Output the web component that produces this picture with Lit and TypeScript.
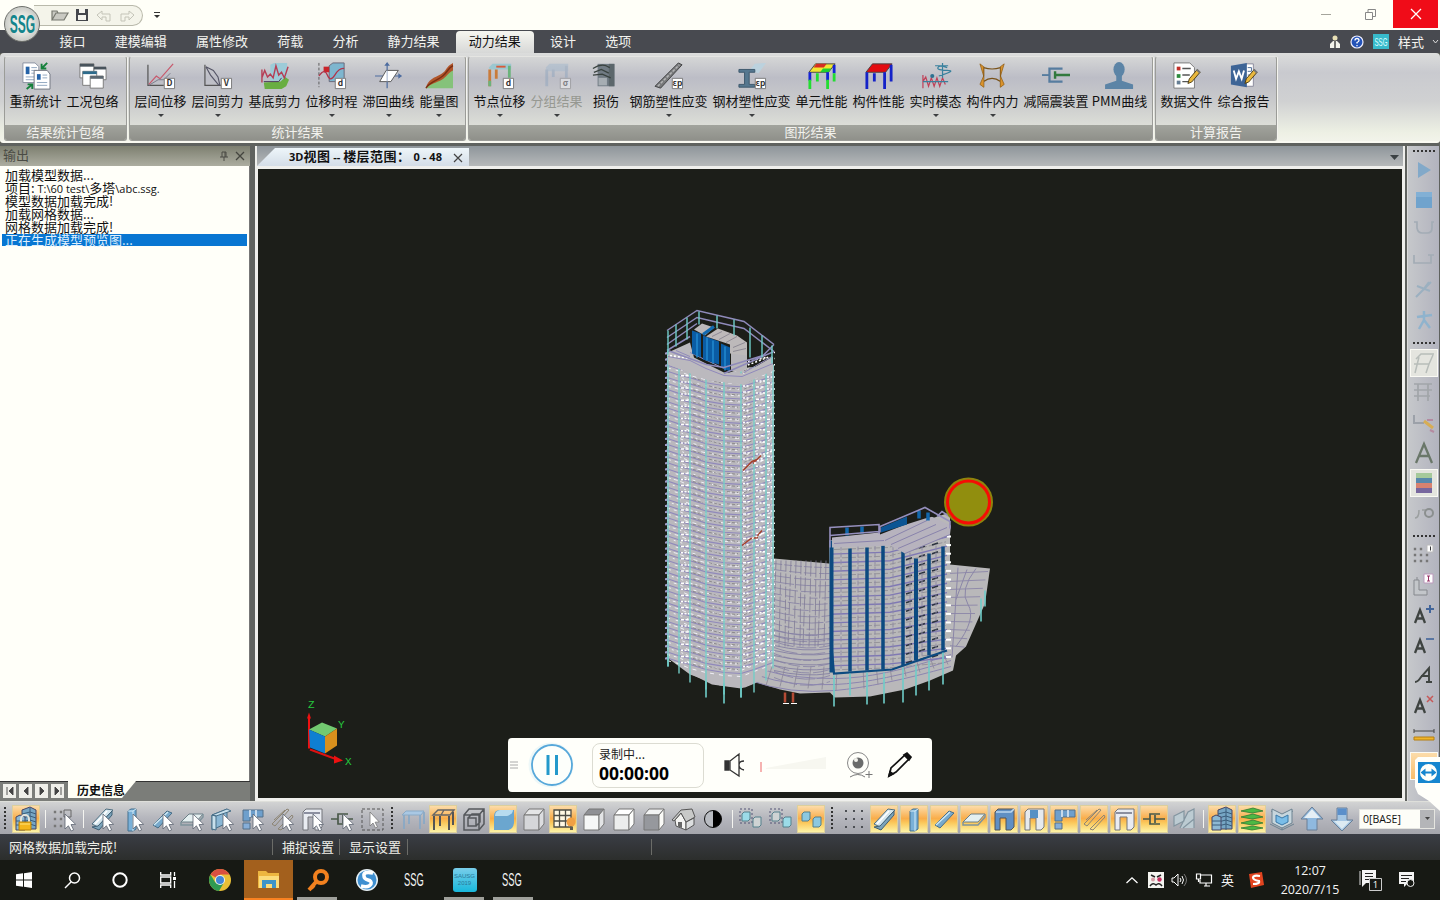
import { LitElement, html, svg, css } from "lit";
import { customElement } from "lit/decorators.js";
import { classMap } from "lit/directives/class-map.js";
import { styleMap } from "lit/directives/style-map.js";

const cursor = svg`<path d="M14 8l0 15 3.400-3.200 2.800 5.200 2.400-1.200-2.600-5.200 4.600-.3z" fill="#fff" stroke="#5a6270" stroke-width=".8"/>`;
const beam = svg`<path d="M3 18L17 3l7 1-3 3L9 21z" fill="#d4e6ee" stroke="#4f6e80"/><path d="M3 21l7 3L23 9V5L9 20z" fill="#7ba3ba" stroke="#3f6076"/><path d="M6 18L18 5" stroke="#fff" stroke-width="1.500"/>`;
const column = svg`<path d="M9 5l3-2h5v20l-3 2H9z" fill="#79b0d8" stroke="#45708f"/><path d="M9 5h5v20M14 5l3-2" fill="none" stroke="#d5ecf8"/>`;
const brace = svg`<path d="M4 19L18 5l5 2L9 22z" fill="#77a9cc" stroke="#476d86"/><path d="M5 19L19 6" stroke="#d2e9f3" stroke-width="1.4"/>`;
const slab = svg`<path d="M2 16l8-8h14l-7 8z" fill="#e4eff0" stroke="#6b7f86"/><path d="M2 16v3h15l7-8V8" fill="none" stroke="#7f949c" stroke-width="1.500"/>`;
const wall = svg`<path d="M3 9l15-6v14L3 24z" fill="#8ab7d5" stroke="#476e88"/><path d="M3 9l4 1v14l-4-1zM3 9l15-6 4 2-15 5z" fill="#c8e0ec" stroke="#476e88"/>`;
const opening = svg`<path d="M4 6l3-3h16v18l-3 3h-5V12h-6v12H4z" fill="#5f8fc4" stroke="#555"/><path d="M5 6h15l3-3" fill="none" stroke="#bdd8ee" stroke-width="1.600"/>`;
const opening2 = svg`<path d="M4 6l3-3h16v18l-3 3h-5V12h-6v12H4z" fill="#e6eaee" stroke="#777"/><path d="M9 4h8v8H9z" fill="#5590c4"/>`;
const elbow = svg`<path d="M4 4h20v7H11v4H4z" fill="#6e9fcc" stroke="#55708a"/><path d="M4 17h7v6H4z" fill="#86aed8" stroke="#55708a"/><path d="M11 4v7M17 4v7" stroke="#e6eef5" stroke-width="1.500"/>`;
const rods = svg`<path d="M3 18L18 3l2 1L6 20zM9 23L23 9l1 2L12 24zM5 14L16 4" fill="none" stroke="#8d8574"/>`;
const portal = svg`<path d="M4 6l3-3h16v18l-3 3h-4V11H9v13H4z" fill="#e9ecf2" stroke="#73747a"/><path d="M5 7h16" stroke="#8b8fa0" stroke-width="2"/>`;
const damper = svg`<path d="M2 13h7M19 18H9V8h10M14 9v8M14 13h10" fill="none" stroke="#4a5a4a" stroke-width="1.7"/>`;
const cube = (a: string, b: string, c: string) => svg`<path d="M4 9l5-6h15l-5 6z" fill="${a}" stroke="#777"/><path d="M4 9h15v15H4z" fill="${b}" stroke="#777"/><path d="M19 9l5-6v15l-5 6z" fill="${c}" stroke="#777"/>`;
const dots = svg`<path d="M5 5h0M13 5h0M21 5h0M5 13h0M13 13h0M21 13h0M5 21h0M13 21h0M21 21h0" stroke="#4c4f54" stroke-width="2" stroke-linecap="square"/>`;
const tower = svg`<path d="M9 4l8-3 6 3v19H9z" fill="#76a6c4" stroke="#446"/><path d="M9 8l8-2 6 2M9 12l8-2 6 2M9 16l8-2 6 2M9 20l8-2 6 2M17 2v22" stroke="#3a5d7a" fill="none"/><path d="M3 11l4-2 5 2v13H3z" fill="#8db9d3" stroke="#446"/><path d="M3 15h9M3 19h9" stroke="#3a5d7a"/>`;
const twins = (a: string, b: string) => svg`<path d="M4 8l2-2h6v7l-2 2H4z" fill="${a}" stroke="#55808c"/><path d="M15 13l2-2h6v8l-2 2h-6z" fill="${b}" stroke="#55808c"/>`;

const ICONS: Record<string, unknown> = {
  lock: svg`${tower}<path d="M8 16v-3a4 4 0 0 1 8 0v3" fill="none" stroke="#e4e4dc" stroke-width="2"/><path d="M6 16h12v8H6z" fill="#f4b61c" stroke="#b88208"/><path d="M7 18h10" stroke="#ffe37a"/>`,
  selNode: svg`<path d="M4 6h0M10 6h0M4 13h0M10 13h0M4 20h0M10 20h0" stroke="#777" stroke-width="2.4" stroke-linecap="square"/><path d="M13 4h7v7h-7z" fill="none" stroke="#666"/>${cursor}`,
  selBeam: svg`${beam}${cursor}`, selColumn: svg`${column}${cursor}`, selBrace: svg`${brace}${cursor}`,
  selSlab: svg`${slab}${cursor}`, selWall: svg`${wall}${cursor}`, selElbow: svg`${elbow}${cursor}`,
  selRods: svg`${rods}${cursor}`, selPortal: svg`${portal}${cursor}`, selDamper: svg`${damper}${cursor}`,
  selBox: svg`<path d="M3 3h21v21H3z" fill="none" stroke="#555" stroke-dasharray="3 2"/><path d="M11 6v14l3-3 2.500 5 2-1-2.400-4.800 4.200-.2z" fill="#fff" stroke="#777" stroke-width=".8"/>`,
  table: svg`<path d="M2 9l4-4h18l-3 4z" fill="#a9c8e4" stroke="#8aaac6"/><path d="M4 9v14M20 9v14M24 6v12M9 9v9" stroke="#87a8c6" stroke-width="1.7"/>`,
  frame: svg`<path d="M3 9l5-5h16l-4 5zM14 4l-3 5" fill="none" stroke="#666" stroke-width="1.4"/><path d="M4 10v14M19 10v14M23 6v13M10 10v10" stroke="#555" stroke-width="2"/>`,
  wire: svg`<path d="M4 9l5-6h15v15l-5 6H4zM4 9h15v15M19 9l5-6M8 12h8v8H8zM8 12l4-4h8v8l-4 4" fill="none" stroke="#55585c" stroke-width="1.500"/>`,
  solid: svg`<path d="M4 10q0-6 6-6h14v13q-1 7-7 7H4z" fill="#6ba6cf"/><path d="M5 10h12q6-2 6-6H10Q5 5 5 10z" fill="#b7dbef"/>`,
  cube0: cube("#e4e5e6", "#d5d6d9", "#dcdde0"), cubeTop: cube("#8f9095", "#f6f7f7", "#e3e4e6"),
  cubeSide: cube("#fff", "#eceded", "#fdfdfb"), cubeFront: cube("#f2f3f3", "#96989d", "#fafaf7"),
  grid: svg`<path d="M4 4h17v17H4zM4 9.5h17M4 15h17M9.5 4v17M15.500 4v17" fill="#fff8e3" stroke="#4d4d46" stroke-width="1.3"/><circle cx="21" cy="16" r="4.500" fill="#f0a044"/><path d="M20 20.500h3v3.500h-3z" fill="#5c5a50"/>`,
  house: svg`<path d="M5 14l6-7 5 9v8l-10-4z" fill="#f4f4f2" stroke="#555"/><path d="M16 16l8-4v7l-8 5z" fill="#dcdedf" stroke="#555"/><path d="M2 14L11 4l11-1 3 8-9 5-5-9-7 8z" fill="#c8c9c8" stroke="#555"/><path d="M8 16h4v6l-4-1.500z" fill="#666"/>`,
  contrast: svg`<circle cx="13" cy="13" r="8.500" fill="#b9bcc2" stroke="#111"/><path d="M13 4.500a8.500 8.500 0 0 1 0 17z" fill="#000"/>`,
  twinA: svg`<path d="M2 3h12v14H2z" fill="none" stroke="#557" stroke-dasharray="2 2"/>${twins("#9bdbe8", "#cfd3d3")}`,
  twinB: svg`<path d="M2 3h12v14H2z" fill="none" stroke="#557" stroke-dasharray="2 2"/>${twins("#cfd3d3", "#9bdbe8")}`,
  twinC: twins("#8cc8e0", "#8cc8e0"),
  dots, beam, column, brace, slab, opening, opening2, elbow, rods, portal, damper,
  ghost: svg`<path d="M3 10L13 5v10L3 20zM9 22l8-16 6-3v19M12 22l11-9" fill="#bccbd2" stroke="#8395a0" stroke-width="1.2"/>`,
  tower,
  floors: svg`<path d="M2 5l12-3 10 3-11 2zM2 11l12-3 10 3-11 2zM2 17l12-3 10 3-11 2zM2 22l12-2 10 2-11 2z" fill="#4cb944" stroke="#2f7a33" stroke-width=".8"/>`,
  view: svg`<path d="M2 5l11 5 11-5M1 18l12 6 12-6M13 12v12" fill="none" stroke="#6c8391"/><path d="M3 3l10 5 10-5v14l-10 5-10-5z" fill="#c7d6dd" stroke="#6c8391"/><path d="M7 9l6 3 6-3v7l-6 3-6-3z" fill="#79bde8" stroke="#3a78a8"/>`,
  up: svg`<path d="M13 1l11 12h-6v11H8V13H2z" fill="#8fb9df" stroke="#6a7f96"/><path d="M13 3l8 9H5z" fill="#e5eff5"/>`,
  down: svg`<path d="M13 25L2 14h6V2h10v12h6z" fill="#a4c6e4" stroke="#6a7f96"/><path d="M8.500 2.500h9V9h-9z" fill="#5b8fca"/><path d="M13 23l-8-8h16z" fill="#dceaf2"/>`,
  play: svg`<path d="M7 5l13 8-13 8z" fill="#82a9c9"/>`,
  stop: svg`<path d="M5 5h16v16H5z" fill="#70a3cd"/><path d="M5 5h16v5H5z" fill="#82b0d5"/>`,
  cup: svg`<path d="M3 5h3v6q1 5 5 5h5q5 0 5-5V5h2" fill="none" stroke="#a3acb5" stroke-width="1.700"/>`,
  tray: svg`<path d="M3 8v8h17V8M17 8h6" fill="none" stroke="#a3acb5" stroke-width="1.700"/>`,
  pick: svg`<path d="M5 20L20 5M6 9l13 5M12 13l6-8" fill="none" stroke="#9bb0c0" stroke-width="2"/>`,
  walk: svg`<path d="M13 4v9l-5 9M13 13l6 8M6 10l15-2" fill="none" stroke="#8fb3cd" stroke-width="2.500"/>`,
  bent: svg`<path d="M5 9l5-5h13M3 14h15l4-9M8 7L4 23M18 14l-3 9" fill="none" stroke="#b7bdb9" stroke-width="1.5"/>`,
  rack: svg`<path d="M3 4h18M3 10h18M3 16h16M7 4v17M17 4v17" fill="none" stroke="#a1a5a9" stroke-width="1.700"/>`,
  brush: svg`<path d="M3 5v8h10" fill="none" stroke="#9ca1a9" stroke-width="2"/><path d="M13 11l9 7" stroke="#d7ad55" stroke-width="3"/><path d="M16 10h6M19 20l4 2" stroke="#b48aa0" stroke-width="2"/>`,
  bigA: svg`<path d="M5 23L13 4l8 19M8 16h10" fill="none" stroke="#6a7769" stroke-width="2.3"/>`,
  bands: svg`<path d="M5 3h16v5H5z" fill="#a5c99b"/><path d="M5 8h16v5H5z" fill="#5888ac"/><path d="M5 13h16v5H5z" fill="#d88270"/><path d="M5 18h16v5H5z" fill="#77679e"/>`,
  gear: svg`<path d="M4 18q4 0 4-8M11 10h4" fill="none" stroke="#9b9f9f" stroke-width="1.5"/><circle cx="18" cy="13" r="4" fill="none" stroke="#8b8f8f" stroke-width="2"/>`,
  dots1: svg`<path d="M4 6h0M10 6h0M4 12h0M10 12h0M16 12h0M4 18h0M10 18h0M16 18h0" stroke="#777" stroke-width="2.400" stroke-linecap="square"/><path d="M16 2h6v7h-6z" fill="#fff" stroke="#bbb"/><path d="M19.500 3.500v4" stroke="#333"/>`,
  corner: svg`<path d="M3 7v15h13v-5H8V7zM6 4v3" fill="#c3c6ca" stroke="#85888d"/><path d="M13 1h9v9h-9z" fill="#fff" stroke="#b9b"/><path d="M17.500 3v5M16 3h3M16 8h3" stroke="#936"/>`,
  aPlus: svg`<path d="M4 20l5-13 5 13M6 15.500h6" fill="none" stroke="#3f4441" stroke-width="2.300"/><path d="M19 2v8M15 6h8" stroke="#42659a" stroke-width="2"/>`,
  aMinus: svg`<path d="M4 20l5-13 5 13M6 15.500h6" fill="none" stroke="#3f4441" stroke-width="2.300"/><path d="M15 6h8" stroke="#42659a" stroke-width="1.600"/>`,
  aItal: svg`<path d="M4 19q3 0 6-5l8-9v14M10 13h8M15 19h6" fill="none" stroke="#3f4441" stroke-width="1.900"/>`,
  aDel: svg`<path d="M4 20l5-13 5 13M6 15.500h6" fill="none" stroke="#3f4441" stroke-width="2.300"/><path d="M16 3l6 6M22 3l-6 6" stroke="#c75858" stroke-width="1.500"/>`,
  ruler: svg`<path d="M3 8h20M3 6v4M23 6v4" stroke="#444"/><path d="M3 14h20v3H3z" fill="#f0b52a" stroke="#b57f10"/>`,
};

const badge = (t: string) => svg`<path d="M18.500 17.500h11v11h-11z" fill="#fff" stroke="#777"/><text x="24" y="26" font-size="9" font-weight="700" text-anchor="middle" fill="#333">${t}</text>`;
const word = svg`<path d="M17 2h8v24h-8z" fill="#fff" stroke="#889"/><path d="M19 6h4v4h-4M19 14h4" fill="none" stroke="#4b6c94"/><path d="M1 4l17-3v26L1 24z" fill="#3d6496"/><path d="M4 9l2.500 9 3-8 3 8 2.500-9" fill="none" stroke="#fff" stroke-width="2"/>`;
const pencil = svg`<path d="M16 23l1.500-5L26 8l3 3-9 10.500z" fill="#e9b83e" stroke="#493a12"/><path d="M25.500 8l3.500 3.500" stroke="#777" stroke-width="2"/>`;

const RIB: Record<string, unknown> = {
  recalc: svg`<path d="M1 1h13l4 4v17H1z" fill="#fff" stroke="#8990a0"/><path d="M4 5h4v8H4z" fill="#2563a8"/><path d="M10 6h6M10 9h6M10 12h5M4 16h11M4 19h9" stroke="#8da4bd"/><path d="M13 9h14l3 4v16H13z" fill="#fff" stroke="#70757f"/><path d="M16 13h4v6h-4z" fill="#2563a8"/><path d="M22 14h5M22 17h5M16 22h11M16 25h11" stroke="#8da4bd"/><path d="M27 1l-6 6M21 2v5h5M5 29l6-5M6 24h5v5" fill="none" stroke="#15803b" stroke-width="2"/>`,
  cases: svg`<path d="M1 2h15v15H1z" fill="#fff" stroke="#777"/><path d="M1 2h15v3H1z" fill="#48535c"/><path d="M16 6h13v13H16z" fill="#fff" stroke="#777"/><path d="M16 5h13v3H16z" fill="#48535c"/><path d="M4 10h15v15H4z" fill="#fff" stroke="#777"/><path d="M4 10h15v3H4z" fill="#2d6b8c"/><path d="M12 15h14v13H12z" fill="#fff" stroke="#777"/><path d="M12 15h14v3H12z" fill="#5b6770"/>`,
  drift: svg`<path d="M1 3v22h17" fill="none" stroke="#555" stroke-width="1.300"/><path d="M2 24L10 15l4 3L28 2" fill="none" stroke="#c8586c" stroke-width="1.300"/><path d="M2 25l10-6 6 0 7-7" fill="none" stroke="#778"/>${badge("D")}`,
  shear: svg`<path d="M1 3v22h17" fill="none" stroke="#555" stroke-width="1.300"/><path d="M2 5l8 4 5 7 2 9M2 5l5 9 9 11" fill="none" stroke="#556" stroke-width="1.200"/>${badge("V")}`,
  base: svg`<path d="M10 3l4-2h14v15l-4 4H10z" fill="#9dcbd8"/><path d="M3 22l18-1 5-5 4 3-3 7-5 3H4z" fill="#69ae42"/><path d="M1 8v14M1 17l3-8 3 7 3-3 3 4 3-13 3 10 3-3 3 6 4-12" fill="none" stroke="#b63e55" stroke-width="1.500"/><path d="M3 21h16l3-4" stroke="#435" fill="none"/>`,
  hist: svg`<path d="M1 1v26" stroke="#555" stroke-dasharray="3 2"/><path d="M12 4l4-3h12v16l-4 4H12z" fill="#7eb6cf" stroke="#667"/><path d="M6 5h6v6H6z" fill="#c9252b"/><path d="M1 15q6-9 9-1t8 0 10-7" fill="none" stroke="#b0344a" stroke-width="1.400"/>${badge("d")}`,
  loop: svg`<path d="M13 1v27M0 15h28" stroke="#4e6da0" stroke-width="1.300"/><path d="M5 21l7-12h13l-8 12z" fill="#fff" stroke="#555"/><path d="M10 4h6l-3-4zM25 12v6l4-3z" fill="#4e6da0"/><path d="M13 9v12" stroke="#9aabc8"/>`,
  energy: svg`<path d="M1 28L15 16 30 5v23z" fill="#85c27a"/><path d="M1 28C3 18 10 17 17 13S22 5 30 1v8C24 12 23 16 18 19S6 23 1 28z" fill="#b0552a"/><path d="M1 28C5 21 13 20 19 15S24 7 30 4" fill="none" stroke="#7a2e12" stroke-width="1.500"/>`,
  nodes: svg`<path d="M3 6l4-4h20v6H4z" fill="#9cc7d0"/><path d="M4 8v18M11 8v10" stroke="#c97b3b" stroke-width="3"/><path d="M4 20v6M25 4v13" stroke="#6bb37b" stroke-width="3"/><path d="M11 4h10v2H11z" fill="#d85a3b"/>${badge("d")}`,
  group: svg`<g opacity=".45"><path d="M3 6l4-4h20v8H4z" fill="#9fb6cd"/><path d="M4 8v18M11 8v8M25 4v13" stroke="#8aa2bd" stroke-width="3"/>${badge("σ")}</g>`,
  damage: svg`<path d="M6 2h18v24H6z" fill="#717b84"/><path d="M18 2h6v24h-6z" fill="#5c676c"/><path d="M1 7q8-5 14-3l4 2M2 11l8-3 8 4M1 14l10-1 9 4" fill="none" stroke="#39423f" stroke-width="1.400"/><path d="M7 17h9v8H7z" fill="#a6adb3"/>`,
  rebar: svg`<path d="M0 26L25 1l4 2L6 28z" fill="#78797b" stroke="#3f4142"/><path d="M3 26L26 3" stroke="#b4b5b6" stroke-width="1.600" stroke-dasharray="3 1.500"/>${badge("εp")}`,
  steel: svg`<path d="M12 9l6-7 12-1-8 11z" fill="#bcd2de"/><path d="M1 8h17v3h-6v13h6v3H1v-3h6V11H1z" fill="#55778f" stroke="#3b566b"/>${badge("εp")}`,
  elem: svg`<path d="M8 2h21l-7 9H1z" fill="#f3e531" stroke="#444"/><path d="M9 2h11l-3 4H6z" fill="#d62d22"/><path d="M16 7h9l-3 4h-9z" fill="#20d030"/><path d="M2 11v9M21 11v9M28 3v9" stroke="#1422d8" stroke-width="3"/><path d="M2 19v10M21 19v10M28 12v9M10 12v9" stroke="#22dd32" stroke-width="3"/>`,
  member: svg`<path d="M8 2h21l-7 9H1z" fill="#e30b10" stroke="#444"/><path d="M2 11v18M21 11v18M28 3v18M10 12v9" stroke="#1422c8" stroke-width="3"/>`,
  mode: svg`<path d="M1 14v14M1 21l3-5 3 10 3-9 3 9 3-9 3 9 3-9 3 7" fill="none" stroke="#c04058" stroke-width="1.300"/><path d="M1 21h27M22 1v16M14 4h14M27 6q-9-3-10 0t10 3-9 6" fill="none" stroke="#38809d" stroke-width="1.300"/><circle cx="11" cy="15" r="2.200" fill="#2d7191"/>`,
  force: svg`<path d="M5 6q9 3 18 0M5 5v22M23 5v22M5 21q9-7 18 0" fill="none" stroke="#795219" stroke-width="1.300"/><path d="M1 2l4 3v10zM27 2l-4 3v10zM5 15l-4 9 4 3M23 15l4 9-4 3" fill="#db932c" stroke="#8e5c16" stroke-width=".8"/>`,
  damp: svg`<path d="M0 14h8" stroke="#567c9f" stroke-width="2"/><path d="M22 7H8v14h14" fill="none" stroke="#567c9f" stroke-width="2.400"/><path d="M14 10v8M14 14h16" stroke="#32793d" stroke-width="2.600"/>`,
  pmm: svg`<ellipse cx="14" cy="8" rx="6" ry="8" fill="#5c84a6"/><path d="M11 14h6v6l12 4v5H-1v-5l12-4z" fill="#5c84a6"/>`,
  data: svg`<path d="M1 1h17l5 5v22H1z" fill="#fff" stroke="#777"/><path d="M4 5h4v4H4z" fill="#c22f28"/><path d="M4 13h4v4H4z" fill="#2d8a3d"/><path d="M4 20h4v4H4z" fill="#667e94"/><path d="M10 7h9M10 14h8M10 21h7" stroke="#555" stroke-width="1.500"/>${pencil}`,
  report: svg`${word}${pencil}`,
};

type Item = { t: string; i: string; w?: number; a?: boolean; off?: boolean };
const GROUPS: { title: string; w: number; items: Item[] }[] = [
  { title: "结果统计包络", w: 123, items: [{ t: "重新统计", i: "recalc" }, { t: "工况包络", i: "cases" }] },
  { title: "统计结果", w: 337, items: [
    { t: "层间位移", i: "drift", a: true }, { t: "层间剪力", i: "shear", a: true }, { t: "基底剪力", i: "base" },
    { t: "位移时程", i: "hist", a: true }, { t: "滞回曲线", i: "loop", a: true }, { t: "能量图", i: "energy", w: 44, a: true }] },
  { title: "图形结果", w: 685, items: [
    { t: "节点位移", i: "nodes", a: true }, { t: "分组结果", i: "group", a: true, off: true }, { t: "损伤", i: "damage", w: 42 },
    { t: "钢筋塑性应变", i: "rebar", w: 83, a: true }, { t: "钢材塑性应变", i: "steel", w: 83, a: true },
    { t: "单元性能", i: "elem" }, { t: "构件性能", i: "member" }, { t: "实时模态", i: "mode", a: true },
    { t: "构件内力", i: "force", a: true }, { t: "减隔震装置", i: "damp", w: 70 }, { t: "PMM曲线", i: "pmm" }] },
  { title: "计算报告", w: 122, items: [{ t: "数据文件", i: "data" }, { t: "综合报告", i: "report" }] },
];

// "|" separator, ":" grip, "*" prefix marks a pressed button
const BAR = ("*lock | selNode | selBeam selColumn selBrace selSlab selWall selElbow selRods selPortal selDamper selBox : " +
  "table *frame wire *solid cube0 *grid cubeTop cubeSide cubeFront house contrast | twinA twinB *twinC : " +
  "dots *beam *column *brace *slab *opening *opening2 *elbow *rods *portal *damper ghost | *tower *floors view up down").split(" ");
const SIDE = ": play stop cup tray pick walk : *bent rack brush bigA *bands gear : dots1 corner aPlus aMinus aItal aDel ruler".split(" ");

@customElement("model-scene")
class ModelScene extends LitElement {
  static styles = css`
    :host { display: block; flex: 1; min-height: 0; background: #1c1e19; overflow: hidden; }
    svg { display: block; width: 100%; height: 100%; }
    .axis { font: 400 11px "Liberation Mono", monospace; fill: #25c83e; }
  `;

  towerLines() {
    const out: unknown[] = [];
    const cols = [[668, 349, 666], [679, 342, 673], [690, 344, 682], [706, 368, 689], [724, 372, 694], [741, 365, 697], [754, 352, 692], [766, 352, 680], [773, 345, 668]];
    for (let k = 0; k < 51; k++) {
      const y = 352 + k * 6.1;
      out.push(svg`<path d="M666 ${y}l12 4 12 3 16 5 18 3 17 1 13-4 19-7" fill="none" stroke="#9089bb" stroke-width="1.100"/>`);
      out.push(svg`<path d="M667 ${y + 3}l11 3 12 5 16 4 18 3 17 1 13-5 19-7" fill="none" stroke="#f0eff6" stroke-width="1" stroke-dasharray="${2 + (k % 3)} ${3 + (k % 4)}"/>`);
      out.push(svg`<path d="M681 ${y + 5}h10M743 ${y + 9}h7M756 ${y + 4}h9M767 ${y}h8" stroke="#fff" stroke-width="1.500" stroke-dasharray="${2 + (k % 2)} 1.500"/>`);
      out.push(svg`<path d="M693 ${y + 7}l10 3M709 ${y + 9}l12 3M727 ${y + 11}l11 1M744 ${y + 6}l8-3" stroke="#8c8a8c" stroke-width="1" stroke-dasharray="3 2"/>`);
      out.push(svg`<path d="M665 ${y + 1}h4" stroke="#a29cc8" stroke-width="2"/>`);
    }
    cols.forEach(([x, a, b]) => out.push(svg`<path d="M${x} ${a}V${b}" stroke="#74cdc8" stroke-width="1.400"/>`));
    return out;
  }

  podiumLines() {
    const out: unknown[] = [];
    for (let k = 0; k < 20; k++) out.push(svg`<path d="M774 ${563 + k * 6}q30 ${4 + k * 0.5} 56 4" fill="none" stroke="#8580a4" stroke-width=".8" stroke-dasharray="${8 + (k % 5) * 4} ${2 + (k % 3)}"/>`);
    for (let k = 0; k < 12; k++) out.push(svg`<path d="M${776 + k * 5} 560l${-3 + (k % 3)} 86" stroke="#807b96" stroke-width=".8" stroke-dasharray="${9 + k} 2"/>`);
    for (let k = 0; k < 9; k++) out.push(svg`<path d="M774 ${630 + k * 5}q30 7 56 3" fill="none" stroke="#8580a4" stroke-width=".9"/>`);
    for (let k = 0; k < 3; k++) out.push(svg`<path d="M${750 + k * 8} ${680 - k * 5}Q790 ${694 - k * 8} 835 ${690 - k * 6}T${951} ${666 - k * 6}" fill="none" stroke="#8c86b0"/>`);
    for (let k = 0; k < 14; k++) out.push(svg`<path d="M${772 + k * 13} ${666 - Math.max(0, k - 7) * 3}l${-6 + k} ${24 - Math.abs(k - 5)}" stroke="#8a8598" stroke-width=".8"/>`);
    for (let k = 0; k < 10; k++) out.push(svg`<path d="M948 ${573 + k * 8}l${40 - k * 2.6} ${-2 + k * 0.4}" stroke="#8b86a8" stroke-width=".9"/>`);
    out.push(svg`<path d="M958 567l-6 90M976 568q-17 22-8 36t-12 42M967 569l-11 30" fill="none" stroke="#8b86a8"/>`);
    return out;
  }

  annexLines() {
    const out: unknown[] = [];
    for (let k = 0; k < 15; k++) {
      const y = 544 + k * 8.6;
      out.push(svg`<path d="M830 ${y + 1}L890 ${y - 1}L947 ${y - 17 + k * 0.7}" fill="none" stroke="#7f78b4" stroke-width="1.400"/>`);
      out.push(svg`<path d="M834 ${y + 5}L888 ${y + 3}L946 ${y - 12 + k * 0.7}" fill="none" stroke="#929096" stroke-width=".9" stroke-dasharray="6 2"/>`);
      out.push(svg`<path d="M906 ${y - 2}l6-2M919 ${y - 5}l6-2M932 ${y - 8}l6-2" stroke="#2c3440" stroke-width="1.600"/>`);
      out.push(svg`<path d="M946 ${y - 8}h5" stroke="#fff" stroke-width="2"/>`);
    }
    for (const x of [841, 858, 875, 893, 910, 922, 936]) out.push(svg`<path d="M${x} 545V${668 - Math.max(0, x - 885) * 0.32}" stroke="#8e8aa4" stroke-dasharray="5 2"/>`);
    const walls = [[831.5, 4, 540, 672], [850, 3.5, 548, 671], [867, 3.5, 547, 670], [883, 3.5, 545, 669], [903, 3.500, 543, 665], [916, 4, 558, 660], [929, 3.500, 553, 655], [943, 3.500, 546, 650]];
    walls.forEach(([x, w, a, b]) => out.push(svg`<path d="M${x} ${a}V${b}" stroke="#0c4a80" stroke-width="${w}"/>`));
    return out;
  }

  render() {
    return html`<svg viewBox="258 169 1144 628">
      <path d="M774 558L829 563 950 564 990 568 985 603 966 646 956 655 953 670 930 680 905 689 870 696 835 697 830 692 800 693 780 689 757 682 745 687 720 685 690 674 667 657 700 600z" fill="#b9b8ba"/>
      ${this.podiumLines()}
      <path d="M985 590v16M981 598v23" stroke="#6fcdc9" stroke-width="1.600"/>
      <path d="M667 350L683 341 760 352 774 350V664L756 682 741 688 712 684 690 673 667 656z" fill="#bab8bd"/>
      ${this.towerLines()}
      <path d="M668 352V330L697 310 744 321 774 344V364L741 368 724 374 690 357z" fill="#1c1e19"/>
      <path d="M668 352l22-10 4 15 30 15 20 1 29-17v14l-30 14-35-4-40-16z" fill="#bbb9be"/>
      <path d="M668 356l22 4 16 8 18 7 18 1 31-13M690 352l34 16M744 372l28-16M676 350l14 6" fill="none" stroke="#9089bb"/>
      <path d="M670 355l20 3M744 366l26-10M748 361l18-4" stroke="#fff" stroke-width="1.600" stroke-dasharray="2 2"/>
      <path d="M692 330l9 3v24l-9-4zM703 335l16 6v23l-16-5zM721 343l9 4v24l-9-4z" fill="#0a5ca4"/>
      <path d="M697 333v24M707 337v23M713 340v23M725 346v24" stroke="#2289cf" stroke-width="1.500"/>
      <path d="M731 346l16 4v18l-8 4-8-2z" fill="#b7b5ba"/>
      <path d="M694 329l8-6 12 4-9 8zM706 336l12-8 19 7 10 7v13l-17-2v-9z" fill="#bdb9ba"/>
      <path d="M703 334l11-8" stroke="#126ab0" stroke-width="3"/>
      <path d="M712 336l10-5M719 339l11-6M726 342l11-6M733 347l12-5M733 351l13-3" stroke="#8e8a95"/>
      <path d="M667 330L697 310 744 321 774 344M667 337L697 317 744 328 774 351M667 344L697 323M667 350L690 336M724 373L774 351M668 350L706 364 724 367 763 355 774 344" fill="none" stroke="#8f8aba" stroke-width="1.500"/>
      <path d="M668 330v24M676 324v22M687 317v22M699 311v13M717 315v13M734 319v16M750 327v30M762 335v22M772 345v18" stroke="#6fcdc9" stroke-width="1.400"/>
      <path d="M743 470l9-9 5-2M753 463l8-8M742 545l9-7 7-1M755 538l7-8" fill="none" stroke="#a5412d" stroke-width="1.500"/>
      <path d="M754 463l8-5 6-6 6-2M752 538l9-4 10-6" stroke="#fff" fill="none" stroke-width="1.500" stroke-dasharray="2 2"/>
      <path d="M829 540L885 533 950 512V648L890 669 831 673z" fill="#b9b8b9"/>
      ${this.annexLines()}
      <path d="M832 537L879 532 925 513 951 525 950 534 905 553 890 545 832 547z" fill="#b7b3be"/>
      <path d="M885 540l42-20M891 544l45-20M898 548l49-21M905 553l45-19M834 543l50-3" stroke="#8983ac" fill="none"/>
      <path d="M880 526L925 508 937 515 925 518 903 525 880 534z" fill="#1c1e19"/>
      <path d="M881 527L907 516V524L881 532z" fill="#0c5594"/><path d="M847 527v8M862 526v7M919 510v8M928 512v8" stroke="#1268ac" stroke-width="3.500"/>
      <path d="M830 547V527L879 524V533M880 532V526L925 507 950 521V528M937 516l5-5 9 6M830 535l49-4" fill="none" stroke="#958fbd" stroke-width="1.600"/>
      <path d="M831 640l3 33 58-4 55-19" fill="none" stroke="#0c4a80" stroke-width="2.200"/>
      <path d="M834 675v31M850 673v22M867 672v32M884 672v31M903 667v35M916 664v31M929 660v30M943 652v32M668 655v11M706 680v17M724 683v20M741 686v11" stroke="#6fcdc9" stroke-width="1.600"/>
      <path d="M785 692v10M793 692v10" stroke="#b44b35" stroke-width="2.500"/><path d="M783 703h6M791 703h6" stroke="#fff"/>
      <circle cx="968.500" cy="501.500" r="24.500" fill="#8e840c"/><circle cx="968.500" cy="501.500" r="21" fill="#918e0e" stroke="#f60d05" stroke-width="3"/>
      <path d="M309 748V716" stroke="#e11" stroke-width="2"/><path d="M307 718l2-6 2 6z" fill="#e11"/>
      <path d="M310 749l27 10" stroke="#d11" stroke-width="2"/><path d="M334 755l9 5-9 3z" fill="#e11"/>
      <path d="M309 729l13-7 15 6-12 8z" fill="#72ca70"/><path d="M309 729l16 7v17l-15-6z" fill="#0f7fd2"/><path d="M325 736l12-8v17l-12 8z" fill="#d8901d"/>
      <text class="axis" x="308" y="707">Z</text><text class="axis" x="338" y="727">Y</text><text class="axis" x="345" y="764">X</text>
    </svg>`;
  }
}

@customElement("app-root")
class AppRoot extends LitElement {
  static styles = css`
    :host { display: flex; flex-direction: column; position: relative; width: 1440px; height: 900px; overflow: hidden;
      background: #55574f; color: #111; font: 13px/16px "Noto Sans CJK SC", "Open Sans", sans-serif; white-space: nowrap; }
    * { box-sizing: border-box; }
    svg { display: block; overflow: visible; }
    .title { height: 30px; flex: none; display: flex; background: #fffff8; }
    .quick { margin: 5px 0 0 34px; width: 109px; height: 21px; border: 1px solid #b9b9ab; border-left: 0; border-radius: 0 11px 11px 0; background: #f4f4ea; }
    .more { margin: 12px 0 0 11px; width: 6px; }
    .win { margin-left: auto; display: flex; height: 28px; }
    .win div { width: 45px; display: grid; place-items: center; }
    .win .x { background: #f00c18; margin-right: 2px; }
    .tabs { height: 23px; flex: none; display: flex; background: #484a50; color: #f4f4f0; padding-left: 45px; line-height: 21px; }
    .tab { padding: 0 14.6px; }
    .tab.on { color: #111; background: linear-gradient(#f6f6f0, #d7d8d7); border-radius: 4px 4px 0 0; margin-top: 1px; line-height: 20px; padding: 0 13px; margin-left: 1.6px; margin-right: 1.6px; }
    .tools { margin-left: auto; display: flex; align-items: center; gap: 9px; padding-right: 2px; line-height: 18px; }
    .ribbon { height: 90px; flex: none; display: flex; gap: 2px; padding: 3px 0 0 4px; border-radius: 4px 4px 3px 3px;
      background: linear-gradient(#dcdddc, #c9cacf 22%, #d0d1d2 55%, #edf0e4 90%, #f2f3ea); border-bottom: 2px solid #fafaf2; }
    .group { display: flex; flex-direction: column; height: 85px; border: 1px solid #9b9c98; border-top-color: #e5e5e2; border-radius: 3px;
      background: linear-gradient(#d5d6d6, #bcbdc6 25%, #cacbcc 55%, #e8eadf 100%); box-shadow: 1px 0 #f4f4ee; }
    .items { display: flex; padding-left: 2px; height: 68px; }
    .item { width: 57px; display: flex; flex-direction: column; align-items: center; flex: none; }
    .item svg { margin-top: 5px; flex: none; }
    .item.off { color: #969891; }
    .lbl { height: 16px; margin-top: 3px; }
    .arr { border: 3px solid transparent; border-top-color: #3c3e40; border-bottom: 0; margin-top: 5px; }
    .gt { flex: 1; background: linear-gradient(#a2a49d, #8f908a); color: #f2f2ee; text-align: center; line-height: 13px; border-radius: 0 0 2px 2px; }
    .body { flex: 1; min-height: 0; display: flex; padding-top: 3px; background: #5f625f; }
    .out { width: 250px; display: flex; flex-direction: column; }
    .oh { height: 20px; background: linear-gradient(#7d7f70, #acada0); color: #4a4b44; display: flex; align-items: center; padding: 0 5px 0 3px; gap: 7px; }
    .oh span { margin: -3px auto 0 0; }
    .log { flex: 1; background: #fffff9; border-right: 1px solid #777; padding: 2px 2px 0; line-height: 13px; }
    .log div { height: 13px; padding-left: 3px; }
    .log small { font: 11px/13px "Open Sans", sans-serif; }
    .log .sel { color: #dfeefc; background: linear-gradient(#0876d2, #0876d2) 0 1px no-repeat; }
    .nav { height: 20px; display: flex; gap: 3px; padding: 2px 0 0 3px; background: #7b7d79; border-top: 1px solid #333; }
    .nav i { width: 13px; height: 14px; background: #efefe9; display: grid; place-items: center; }
    .nav b { margin: -3px 0 0 1px; width: 68px; height: 17px; background: #fffff6; clip-path: polygon(0 0, 100% 0, 54px 100%, 0 100%); font-size: 12px; line-height: 18px; padding-left: 9px; }
    .view { width: 1150px; margin-left: 5px; display: flex; flex-direction: column; border: solid #efefec; border-width: 0 3px 3px; }
    .vt { height: 20px; flex: none; margin: 0 -1px; display: flex; background: linear-gradient(#8e959a, #b6b9ba); align-items: flex-end; padding-right: 3px; }
    .vtab { width: 212px; height: 18px; background: linear-gradient(#eef6fa, #d4dde7); clip-path: polygon(18px 0, 100% 0, 100% 100%, 0 100%); display: flex; align-items: center; font-weight: 700; padding: 0 0 2px 32px; }
    .vtab span { letter-spacing: .45px; }
    .vtab small { font: 700 11px/16px "Open Sans", sans-serif; padding-top: 1px; }
    .vtab .z { margin-left: 3px; letter-spacing: .1px; }
    .vtab svg { margin: 5px 0 0 12px; }
    .vdrop { margin-left: auto; }
    .vline { height: 3px; flex: none; background: #efefec; }
    .side { width: 32px; margin-left: 2px; background: linear-gradient(90deg, #c6c8cb, #b2b3be); border-left: 1px solid #dcdcdc; display: flex; flex-direction: column; align-items: center; }
    .side .btn { height: 30px; width: 30px; }
    .hgrip { width: 22px; height: 2px; margin: 4px 0 3px; background: repeating-linear-gradient(90deg, #333 0 2px, transparent 2px 4px); flex: none; }
    .hgrip.n { margin: 7px 0 4px; }
    .bar { height: 33px; flex: none; display: flex; align-items: center; background: linear-gradient(#d2d3d3, #b5b6bd 50%, #a4a5ac); border-top: 1px solid #dedfda; padding-top: 1px; }
    .btn { width: 30px; height: 30px; flex: none; padding: 1px; }
    .btn div { width: 28px; height: 28px; padding: 1px; }
    .btn.on div { padding: 0; border: 1px solid #dccf9c; background: linear-gradient(#fcdcaa, #f9ad4a 48%, #fbc95c 65%, #fdf3a6); }
    .side .btn.on div { background: #e4e5df; border-color: #fafaf4; }
    .side .btn.on .o { background: linear-gradient(#fcdcaa, #f9bd6a); }
    .vgrip { width: 2px; height: 23px; background: repeating-linear-gradient(#333 0 2px, transparent 2px 4px); margin: 0 5px 0 4px; flex: none; }
    .vgrip.w { margin: 0 6px 0 5px; }
    .sep { width: 1px; height: 18px; background: #f4f4f0; margin: 0 3.5px; flex: none; }
    .combo { width: 76px; height: 20px; margin-left: 2px; background: #fdfdf8; border: 1px solid #e5e5e0; display: flex; font: 10.5px/18px "Open Sans", sans-serif; padding-left: 3px; justify-content: space-between; }
    .combo i { width: 14px; background: #b4b5b8; display: grid; place-items: center; }
    .status { height: 26px; flex: none; display: flex; background: linear-gradient(#3a3d45, #2c2e2c); color: #efefe8; padding-left: 9px; }
    .status div { border-right: 1px solid #6b6c68; height: 16px; margin-top: 5px; line-height: 15px; margin-right: 9px; }
    .task { height: 40px; flex: none; display: flex; background: #171914; color: #f4f4f4; }
    .task .t { width: 49px; display: grid; place-items: center; justify-content: center; }
    .task .t.w { width: 48px; }
    .task .t.hl { background: #a3601d; border-bottom: 2px solid #f98221; }
    .task .t.run { background: linear-gradient(#9fa09b, #9fa09b) 4px 100% / 40px 3px no-repeat; }
    .gap { width: 3px; }
    .ssg { font: 400 18px/20px "Liberation Sans", sans-serif; transform: scaleX(.52); margin: 0 -12px 0 -14px; }
    .app { width: 24px; height: 24px; border-radius: 3px; background: linear-gradient(#79cdea, #18b8dc); font: 6px/7px "Liberation Sans", sans-serif; text-align: center; color: #2b7898; padding-top: 5px; }
    .tray { margin-left: auto; display: flex; align-items: center; }
    .tray > * { flex: none; }
    .clock { width: 80px; text-align: center; font: 12.4px/19px "Open Sans", sans-serif; margin-left: 6px; }
    .ime { margin-left: 9px; width: 14px; }
    .g6 { margin-left: 6px; } .g9 { margin-left: 9px; } .g10 { margin-left: 10px; } .g13 { margin-left: 13px; }
    .note { margin: 0 25px 0 17px; }
    .orb { position: absolute; left: 4px; top: 6px; width: 36px; height: 36px; border-radius: 50%; background: radial-gradient(#efefe9 30%, #c5c7c3 75%, #f5f5f0); border: 1px solid #6e706c; display: flex; justify-content: center; align-items: center; }
    .orb span { font: 700 25px/24px "Liberation Sans", sans-serif; color: #14858c; transform: scaleX(.48); margin: 0 -14px; flex: none; }
    .rec { position: absolute; left: 508px; top: 738px; width: 424px; height: 54px; background: #fffffa; border-radius: 4px; display: flex; align-items: center; }
    .burger { margin: 0 10px 0 2px; }
    .time { margin-left: 18px; width: 112px; height: 45px; border: 1px solid #dcdcd2; border-radius: 8px; padding: 3px 0 0 6px; font-size: 12px; line-height: 14px; color: #222; }
    .time b { display: block; font: 700 17.5px/24px "Open Sans", sans-serif; letter-spacing: 0; color: #000; }
    .mic { margin-left: 20px; } .vol { margin-left: 14px; } .cam { margin-left: 19px; } .pen { margin-left: 14px; }
    .tv { position: absolute; left: 1415px; top: 757px; width: 25px; height: 54px; background: #fffffa; clip-path: polygon(3px 0, 100% 0, 100% 100%, 14px 44px, 3px 37px, 0 30px, 0 3px); padding: 5px 0 0 3px; }
  `;

  cell(n: string) {
    if (n === "|") return html`<span class="sep"></span>`;
    const on = n[0] === "*";
    return html`<div class=${classMap({ btn: true, on })}><div><svg width="26" height="26">${ICONS[on ? n.slice(1) : n]}</svg></div></div>`;
  }

  render() {
    const tabs = ["接口", "建模编辑", "属性修改", "荷载", "分析", "静力结果", "动力结果", "设计", "选项"];
    let grips = 0;
    return html`
      <div class="title">
        <div class="quick"><svg width="109" height="19" fill="none">
          <path d="M18 14l4-7h12l-4 7zM18 14V5h5l1 2h6" fill="#c9c9c2" stroke="#777970" stroke-width="1.200"/>
          <path d="M42 3h12v12H42z" fill="#44464c"/><path d="M45 3h6v4h-6zM44 9h8v5h-8z" fill="#f4f4ee"/>
          <path d="M63 9l5-4v3h8v7h-4v-4h-4v3zM100 9l-5-4v3h-8v7h4v-4h4v3z" stroke="#c4c4b8"/></svg></div>
        <div class="more"><svg width="6" height="7"><path d="M0 .5h6" stroke="#333"/><path d="M0 3h6L3 6z" fill="#333"/></svg></div>
        <div class="win">
          <div><svg width="10" height="10"><path d="M0 5.500h10" stroke="#a5a59c"/></svg></div>
          <div><svg width="11" height="11" fill="none" stroke="#888"><path d="M.5 3.500h7v7h-7zM3 3V.5h7.500v7H8"/></svg></div>
          <div class="x"><svg width="10" height="10"><path d="M0 0l10 10M10 0L0 10" stroke="#fff" stroke-width="1.300"/></svg></div>
        </div>
      </div>
      <div class="tabs">
        ${tabs.map((t) => html`<div class=${classMap({ tab: true, on: t === "动力结果" })}>${t}</div>`)}
        <div class="tools">
          <svg width="12" height="14"><circle cx="6" cy="3" r="2.500" fill="#e9e0b5"/><path d="M1 13V9l3-3h4l3 3v4z" fill="#f2f2ea"/><path d="M6 6v7" stroke="#444" stroke-width="1.500"/></svg>
          <svg width="14" height="14"><circle cx="7" cy="7" r="6" fill="#2453b8" stroke="#eef" stroke-width="1.200"/><path d="M5 5.500q0-2 2-2t2 2q0 1-2 2v1M7 10v1.200" fill="none" stroke="#fff" stroke-width="1.300"/></svg>
          <svg width="16" height="16"><path d="M0 0h16v15H0z" fill="#38bacb"/><text x="8" y="12" font-size="11" font-family="Liberation Sans" text-anchor="middle" fill="#dff" textLength="13" lengthAdjust="spacingAndGlyphs">SSG</text></svg>
          <span>样式</span><svg width="5" height="4"><path d="M0 0l2.500 3L5 0" stroke="#ddd" fill="none"/></svg>
        </div>
      </div>
      <div class="ribbon">
        ${GROUPS.map((g) => html`<div class="group" style=${styleMap({ width: g.w + "px" })}>
          <div class="items">${g.items.map((i) => html`<div class=${classMap({ item: true, off: !!i.off })} style=${styleMap({ width: (i.w ?? 57) + "px" })}>
            <svg width="28" height="28" viewBox="0 0 30 30">${RIB[i.i]}</svg><span class="lbl">${i.t}</span>${i.a ? html`<span class="arr"></span>` : ""}</div>`)}</div>
          <div class="gt">${g.title}</div></div>`)}
      </div>
      <div class="body">
        <div class="out">
          <div class="oh"><span>输出</span>
            <svg width="10" height="10" fill="none" stroke="#4a4a44"><path d="M1 6h8M5 6v4M3 6V1h4v5M6 1v5"/></svg>
            <svg width="9" height="9"><path d="M0 0l8 8M8 0L0 8" stroke="#44453f" stroke-width="1.300"/></svg></div>
          <div class="log">
            <div>加载模型数据...</div><div>项目: <small>T:\\60 test\\</small>多塔<small>\\abc.ssg.</small></div><div>模型数据加载完成!</div>
            <div>加载网格数据...</div><div>网格数据加载完成!</div><div class="sel">正在生成模型预览图...</div>
          </div>
          <div class="nav">
            ${["M1 0v8M7 0v8L3 4z", "M6 0v8L2 4z", "M2 0v8l4-4z", "M1 0v8l4-4zM7 0v8"].map((d) => html`<i><svg width="8" height="8"><path d=${d} fill="#444" stroke="#444" stroke-width=".9"/></svg></i>`)}
            <b>历史信息</b>
          </div>
        </div>
        <div class="view">
          <div class="vt"><div class="vtab"><small>3D</small><span>视图</span><small>&nbsp;--&nbsp;</small><span>楼层范围：</span><small class="z">0 - 48</small>
            <svg width="9" height="9"><path d="M0 0l8 8M8 0L0 8" stroke="#444" stroke-width="1.200"/></svg></div>
            <svg class="vdrop" width="10" height="20"><path d="M0 9h9l-4.500 5z" fill="#3c4244"/></svg></div>
          <div class="vline"></div>
          <model-scene></model-scene>
        </div>
        <div class="side">${SIDE.map((n) => n === ":" ? html`<span class="hgrip ${grips++ ? "n" : ""}"></span>` : this.cell(n))}
          <div class="btn on"><div class="o"></div></div></div>
      </div>
      <div class="bar"><span class="vgrip"></span>
        ${BAR.map((n, i) => n === ":" ? html`<span class=${classMap({ vgrip: true, w: i > 20 })}></span>` : this.cell(n))}
        <div class="combo">0[BASE]<i><svg width="5" height="3"><path d="M0 0h5L2.500 3z" fill="#444"/></svg></i></div>
      </div>
      <div class="status">
        <div style=${styleMap({ width: "264px" })}>网格数据加载完成!</div><div style=${styleMap({ width: "58px" })}>捕捉设置</div>
        <div style=${styleMap({ width: "59px" })}>显示设置</div><div style=${styleMap({ width: "235px" })}></div>
      </div>
      <div class="task">
        <div class="t w"><svg width="16" height="16" fill="#fff"><path d="M0 2.300L7 1.300V7.500H0zM8 1.200L16 0V7.500H8zM0 8.500H7V14.700L0 13.700zM8 8.500H16V16L8 14.800z"/></svg></div>
        <div class="t w"><svg width="17" height="17" fill="none" stroke="#fff" stroke-width="1.500"><circle cx="10.500" cy="6" r="5"/><path d="M7 10L1 16"/></svg></div>
        <div class="t w"><svg width="16" height="16"><circle cx="8" cy="8" r="6.700" fill="none" stroke="#fff" stroke-width="2"/></svg></div>
        <div class="t w"><svg width="17" height="16" fill="none" stroke="#fff" stroke-width="1.300"><path d="M.7 0v3h10V0M.7 16v-3h10v3M.7 5h10v6H.7zM14.500 0v4M14.500 9v7"/><path d="M13 5h3v3h-3z" fill="#fff" stroke="none"/></svg></div>
        <div class="gap"></div>
        <div class="t"><svg width="22" height="22" viewBox="0 0 22 22"><circle cx="11" cy="11" r="11" fill="#e9bf36"/><path d="M11 11L1.500 5.500A11 11 0 0 1 20.500 5.500H11z" fill="#d94f41"/><path d="M1.500 5.500A11 11 0 0 0 10 22l5-8.500H6.300z" fill="#2f9a52"/><circle cx="11" cy="11" r="5" fill="#f2f2ea"/><circle cx="11" cy="11" r="4" fill="#4286d6"/></svg></div>
        <div class="t hl"><svg width="22" height="19"><path d="M0 1h8l2 2h11v15H0z" fill="#edb640"/><path d="M1 6h20v12H1z" fill="#fbdc7c"/><path d="M4 18v-8h14v8h-4v-4H8v4z" fill="#3e94c9"/></svg></div>
        <div class="t run"><svg width="22" height="23" fill="none" stroke="#f2811f"><circle cx="14" cy="8" r="6" stroke-width="4"/><path d="M9 13l-7 8M4 16l3 3" stroke-width="4"/></svg></div>
        <div class="t"><svg width="22" height="22"><circle cx="11" cy="11" r="11" fill="#e8f1f5"/><circle cx="11" cy="11" r="9.500" fill="#3f8fd0"/><path d="M17 4q-10-2-9 3 0 3 4 4t3 4q-2 4-10 2" fill="none" stroke="#fff" stroke-width="3.500"/></svg></div>
        <div class="t"><span class="ssg">SSG</span></div>
        <div class="t run"><div class="app">SAUSG<br>2019</div></div>
        <div class="t run"><span class="ssg">SSG</span></div>
        <div class="tray">
          <svg width="12" height="7" fill="none" stroke="#fff" stroke-width="1.300"><path d="M.5 6L6 .8 11.500 6"/></svg>
          <svg class="g10" width="17" height="17"><path d="M0 0h16v16H0z" fill="#f4f4f0"/><path d="M2 14q3-4 6-1 3-3 6 1M3 3l4 2M13 3L9 5" fill="none" stroke="#222" stroke-width="1.500"/><circle cx="5" cy="7.500" r="2" fill="#d49ca5"/><circle cx="11.500" cy="7.500" r="2.200" fill="#c72f62"/></svg>
          <svg class="g6" width="16" height="14" fill="none" stroke="#fff"><path d="M1 5v4h2l4 4V1L3 5zM9 5q2 2 0 4M11 3q3 4 0 8"/><path d="M13 1q5 6 0 12" stroke="#777"/></svg>
          <svg class="g9" width="16" height="14" fill="none" stroke="#fff" stroke-width="1.200"><path d="M5 2h10.500v8H4V7M8 13h6M10 10v3M.5 1h4v5h-4zM2.500 6v3"/></svg>
          <span class="ime">英</span>
          <svg class="g13" width="16" height="16"><path d="M1 2l13-2 2 13-13 3z" fill="#e2441f"/><path d="M12 4q-7-1-7 1.500T11 9q1 3-6 3" fill="none" stroke="#fff" stroke-width="2.200"/></svg>
          <div class="clock">12:07<br>2020/7/15</div>
          <svg class="g9" width="23" height="22" fill="none"><path d="M3 1h14v13H7l-4 4z" fill="#f4f4f4"/><path d="M6 4.500h8M6 7.500h8M6 10.500h5" stroke="#222"/><path d="M1 2v14" stroke="#ddd"/><path d="M10.500 9.500h12v12h-12z" fill="#171914" stroke="#ccc"/><text x="16.500" y="19" font-size="9.500" font-family="Open Sans" text-anchor="middle" fill="#fff">1</text></svg>
          <svg class="note" width="16" height="16"><path d="M0 0h15v12H8l-3 3v-3H0z" fill="#f4f4f4"/><path d="M2 3.500h11M2 6.500h8M2 9.500h5" stroke="#222"/><circle cx="11.500" cy="11" r="3.500" fill="#171914" stroke="#eee"/></svg>
        </div>
      </div>
      <div class="orb"><span>SSG</span></div>
      <div class="rec">
        <svg class="burger" width="8" height="8"><path d="M0 1h8M0 4h8M0 7h8" stroke="#aaa"/></svg>
        <svg width="46" height="46"><circle cx="23" cy="23" r="22.500" fill="#eef8f8"/><circle cx="24" cy="23" r="20" fill="#fdfffb" stroke="#57a8da" stroke-width="1.800"/><path d="M20 13v20M28.500 13v20" stroke="#2399cb" stroke-width="3"/></svg>
        <div class="time">录制中...<b>00:00:00</b></div>
        <svg class="mic" width="22" height="24" fill="none" stroke="#333" stroke-width="1.300"><path d="M6 8v9l9 6V1zM20 8q-5 0-5 4t5 5"/><path d="M1 8h4v9H1z" fill="#333"/></svg>
        <svg class="vol" width="68" height="20"><path d="M1 7v10" stroke="#f39a98" stroke-width="1.500"/><path d="M6 13L66 2v12H6z" fill="#f7f7f0"/></svg>
        <svg class="cam" width="26" height="28" fill="none" stroke="#888"><circle cx="11" cy="12" r="10.500"/><circle cx="11" cy="12" r="5.500" fill="#6b6c6c" stroke="none"/><circle cx="9" cy="9" r="2" fill="#f4f4ee" stroke="none"/><path d="M3 26q8-5 15 0M22 20v7M18.500 23.500h7" stroke="#777"/></svg>
        <svg class="pen" width="26" height="26" fill="none" stroke="#111" stroke-width="1.700"><path d="M2 24l2-8L18 3l4 4L9 20z"/><path d="M17 3l3-2 4 4-2 3z" fill="#111"/><path d="M2 24l1-4 3 2z" fill="#111"/></svg>
      </div>
      <div class="tv"><svg width="22" height="21"><path d="M0 0h22v21H0z" fill="#1686cf"/><circle cx="10.500" cy="10.500" r="8.500" fill="#fffffa"/><path d="M2.500 10.500l5-4v3h6v-3l5 4-5 4v-3h-6v3z" fill="#1686cf"/></svg></div>
    `;
  }
}
